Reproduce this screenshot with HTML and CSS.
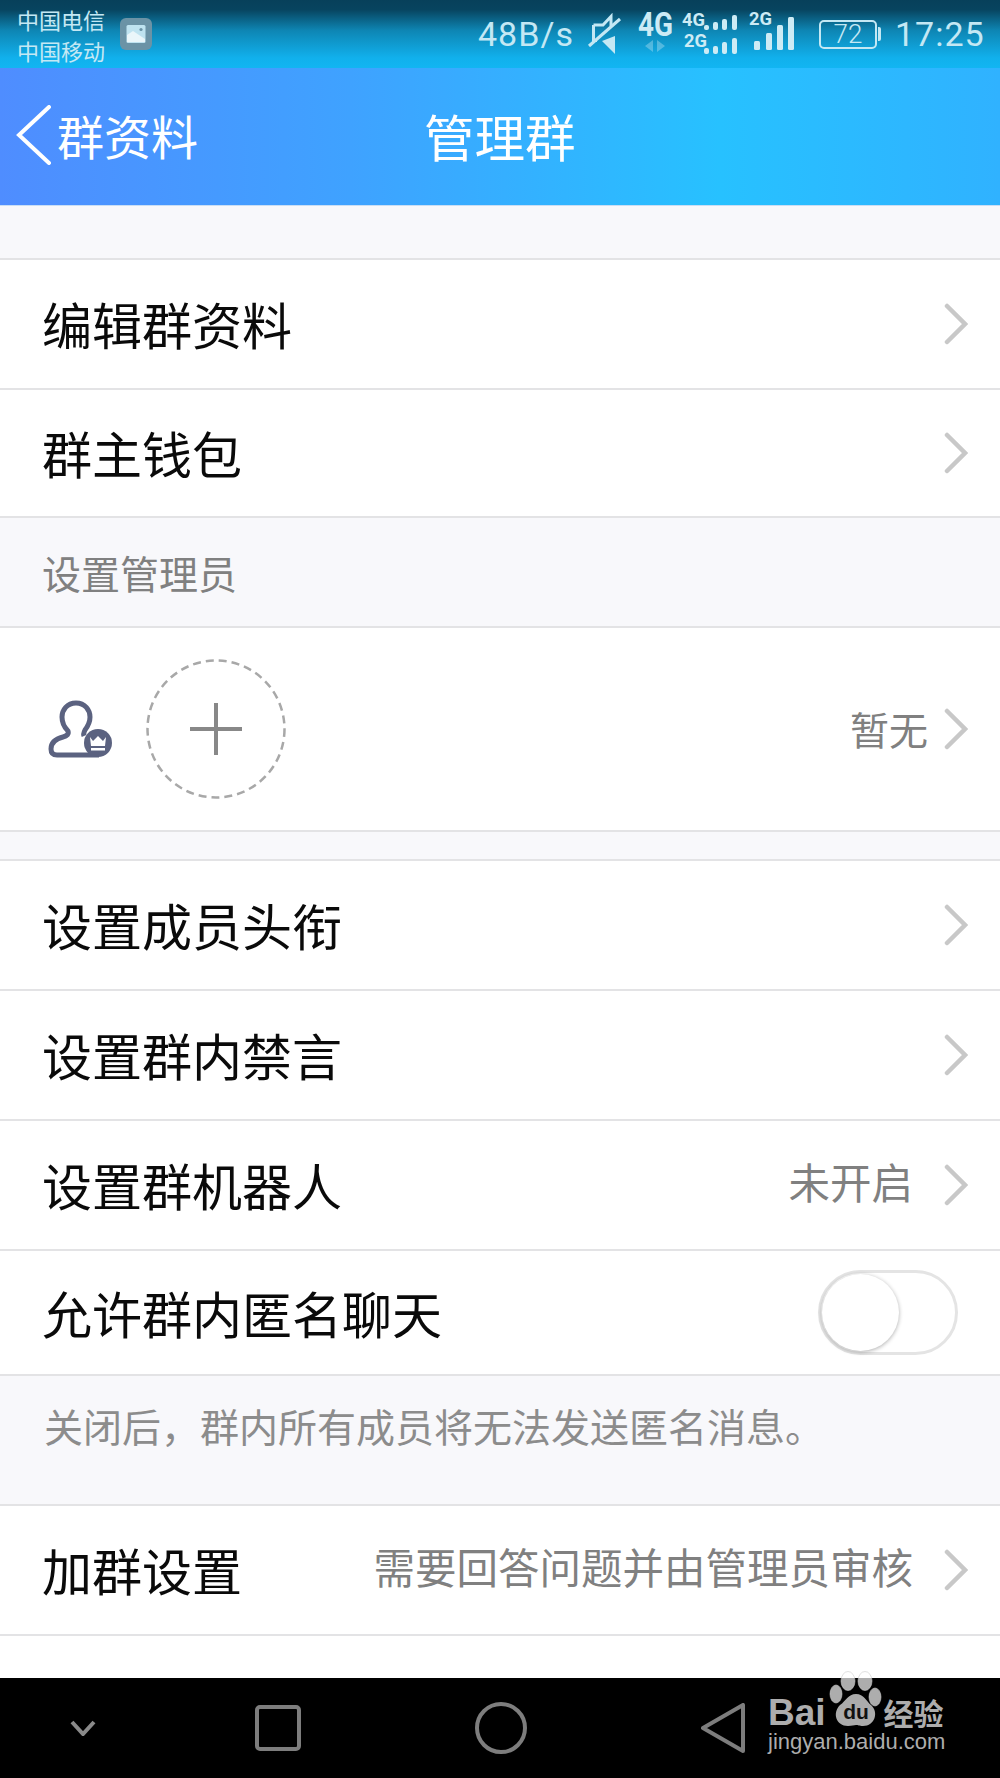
FILE: index.html
```html
<!DOCTYPE HTML>
<html>
<head>
	<meta http-equiv="Content-Type" content="text/html; charset=utf-8">
	<title>管理群</title>
	<link rel="stylesheet" href="styles.css">
</head>
<body>
	<div class="status">
		<div class="carrier">
			<span>中国电信</span>
			<span>中国移动</span>
		</div>
		<svg class="notice" width="32" height="32" viewBox="0 0 32 32">
			<rect width="32" height="32" rx="6" fill="#6b93a6"/>
			<rect x="6.500" y="7" width="19" height="18" rx="1.500" fill="#bfe3f0"/>
			<path d="M7 17l6-4 12 8v3H7z" fill="#eaf6fa"/>
			<circle cx="21" cy="11.500" r="1.600" fill="#6b93a6"/>
		</svg>
		<div class="speed">48B/s</div>
		<svg class="mute" width="34" height="42" viewBox="0 0 34 42" fill="none" stroke="#c4e8f4" stroke-width="3">
			<path d="M5.500 12H15l8-8.500V13M5.500 12v15.500H9"/>
			<path d="M27 23v18L14 28z" fill="#c4e8f4" stroke="none"/>
			<path d="M1 33L32 6"/>
		</svg>
		<svg class="signal" width="156" height="68" viewBox="0 0 156 68">
			<g fill="#cdebf5" font-family="Roboto, sans-serif" font-weight="700">
				<text x="0" y="36" font-size="33" textLength="35" lengthAdjust="spacingAndGlyphs">4G</text>
				<text x="44" y="26" font-size="18" textLength="23" lengthAdjust="spacingAndGlyphs">4G</text>
				<text x="46" y="47" font-size="18" textLength="23" lengthAdjust="spacingAndGlyphs">2G</text>
				<text x="111" y="25" font-size="18" textLength="23" lengthAdjust="spacingAndGlyphs">2G</text>
				<path d="M15 40l-8 6 8 6zM19 40l8 6-8 6z" opacity=".35"/>
				<rect x="66" y="25" width="5" height="5" rx="2"/>
				<rect x="75" y="22" width="5" height="8" rx="2"/>
				<rect x="84" y="19" width="5" height="11" rx="2"/>
				<rect x="94" y="15" width="5" height="15" rx="2"/>
				<rect x="66" y="48" width="5" height="6" rx="2"/>
				<rect x="75" y="46" width="5" height="8" rx="2"/>
				<rect x="84" y="42" width="5" height="12" rx="2"/>
				<rect x="94" y="38" width="5" height="16" rx="2"/>
				<rect x="116" y="41" width="6" height="9" rx="1.500"/>
				<rect x="128" y="33" width="6" height="17" rx="1.500"/>
				<rect x="139" y="25" width="6" height="25" rx="1.500"/>
				<rect x="150" y="17" width="6" height="33" rx="1.500"/>
			</g>
		</svg>
		<div class="battery"><span>72</span></div>
		<div class="clock">17:25</div>
	</div>

	<header>
		<div class="back">
			<svg width="36" height="60" viewBox="0 0 36 60" fill="none" stroke="#fff" stroke-width="4" stroke-linecap="round">
				<path d="M33 2L3 30l30 28"/>
			</svg>
			<span>群资料</span>
		</div>
		<div class="title">管理群</div>
	</header>

	<main>
		<section class="group first">
			<div class="row"><label>编辑群资料</label><svg class="arrow"><use href="#chevron"/></svg></div>
			<div class="row tight"><label>群主钱包</label><svg class="arrow"><use href="#chevron"/></svg></div>
		</section>
		<div class="caption">设置管理员</div>
		<section class="group">
			<div class="admin">
				<svg width="64" height="58" viewBox="0 0 64 58" fill="none" stroke="#5b6280" stroke-width="5">
					<path d="M28 3c-9 0-14 7-14 14 0 7 3 11 6 14 1 3-1 5-5 6-8 2-12 6-12 12 0 4 2 6 6 6h42"/>
					<path d="M28 3c9 0 14 7 14 14 0 6-2 9-5 13-1 2-2 4-1 6"/>
					<circle cx="50" cy="43" r="14" fill="#5b6280" stroke="none"/>
					<path d="M42 37l3 4 5-5 5 5 3-4-1 9H43z" fill="#fff" stroke="none"/>
					<rect x="43" y="48" width="14" height="2.500" fill="#fff" stroke="none"/>
				</svg>
				<svg class="add" width="140" height="140" viewBox="0 0 140 140" fill="none">
					<circle cx="70" cy="70" r="68.500" stroke="#a8a8a8" stroke-width="2.500" stroke-dasharray="8 5"/>
					<path d="M70 44v52M44 70h52" stroke="#888" stroke-width="4"/>
				</svg>
				<span class="value none">暂无</span>
				<svg class="arrow"><use href="#chevron"/></svg>
			</div>
		</section>
		<div class="gap"></div>
		<section class="group">
			<div class="row"><label>设置成员头衔</label><svg class="arrow"><use href="#chevron"/></svg></div>
			<div class="row"><label>设置群内禁言</label><svg class="arrow"><use href="#chevron"/></svg></div>
			<div class="row"><label>设置群机器人</label><span class="value">未开启</span><svg class="arrow"><use href="#chevron"/></svg></div>
			<div class="row short">
				<label>允许群内匿名聊天</label>
				<div class="toggle"><div class="knob"></div></div>
			</div>
		</section>
		<div class="note">关闭后，群内所有成员将无法发送匿名消息。</div>
		<section class="group">
			<div class="row"><label>加群设置</label><span class="value">需要回答问题并由管理员审核</span><svg class="arrow"><use href="#chevron"/></svg></div>
		</section>
	</main>

	<nav>
		<svg class="nav-down" width="26" height="16" viewBox="0 0 26 16" fill="none" stroke="#8a8a8a" stroke-width="4">
			<path d="M2 2l11 12L24 2"/>
		</svg>
		<svg class="nav-square" width="46" height="46" viewBox="0 0 46 46" fill="none" stroke="#7d7d7d" stroke-width="4">
			<rect x="2" y="2" width="42" height="42" rx="3"/>
		</svg>
		<svg class="nav-circle" width="52" height="52" viewBox="0 0 52 52" fill="none" stroke="#7d7d7d" stroke-width="4">
			<circle cx="26" cy="26" r="24"/>
		</svg>
		<svg class="nav-back" width="44" height="50" viewBox="0 0 44 50" fill="none" stroke="#7d7d7d" stroke-width="4" stroke-linejoin="round">
			<path d="M42 2v46L2 25z"/>
		</svg>
	</nav>

	<div class="mark">
		<div class="mark-top">
			<span class="bai">Bai</span>
			<svg class="paw" width="54" height="56" viewBox="0 0 54 56">
				<g fill="#fff" fill-opacity=".68" stroke="#ccc" stroke-opacity=".6">
					<ellipse cx="19" cy="10" rx="7" ry="9.500"/>
					<ellipse cx="36" cy="10" rx="7" ry="9.500"/>
					<ellipse cx="7" cy="23" rx="6" ry="9"/>
					<ellipse cx="46" cy="26" rx="6" ry="9"/>
				</g>
				<path d="M27 23c8 0 10 7 15 11 8 7 4 21-8 21-4 0-5-1-7-1s-4 1-8 1c-12 0-16-13-8-21 6-4 8-11 16-11z" fill="#ababab"/>
				<text x="27" y="48" text-anchor="middle" font-family="Liberation Sans, sans-serif" font-size="21" font-weight="700" fill="#111">du</text>
			</svg>
			<span class="jy">经验</span>
		</div>
		<div class="mark-url">jingyan.baidu.com</div>
	</div>

	<svg class="defs" width="0" height="0">
		<symbol id="chevron" viewBox="0 0 24 42">
			<path d="M3 3l18 18L3 39" fill="none" stroke="#c8c8c8" stroke-width="4.500" stroke-linecap="round"/>
		</symbol>
	</svg>
</body>
</html>
```

FILE: styles.css
```css
body{
	margin: 0;
	height: 1778px;
	display: flex;
	flex-direction: column;
	position: relative;
	overflow: hidden;
	background-color: #fff;
	color: #0a0a0a;
	font-family: "Noto Sans CJK SC", "Noto Sans", sans-serif;
}

/* status bar */
.status{
	height: 68px;
	flex-shrink: 0;
	display: flex;
	align-items: center;
	background: linear-gradient(180deg, #07405a 0, #07445f 14%, #0e86b4 45%, #11b0ec 85%, #12b5f2 100%);
	color: #c4e8f4;
	font-family: Roboto, sans-serif;
}
.carrier{
	margin: 2px 0 0 17px;
	width: 89px;
	display: flex;
	flex-direction: column;
	font-family: "Noto Sans CJK SC", sans-serif;
	font-size: 22px;
	line-height: 31px;
}
.notice{
	margin-left: 14px;
}
.speed{
	margin-left: 326px;
	width: 110px;
	font-size: 34px;
	letter-spacing: 1px;
}
.signal{
	margin-left: 16px;
}
.battery{
	margin-left: 25px;
	box-sizing: border-box;
	width: 58px;
	height: 29px;
	border: 2.500px solid #c4e8f4;
	border-radius: 5px;
	display: flex;
	align-items: center;
	justify-content: center;
	font-size: 26px;
	font-weight: 300;
	position: relative;
}
.battery::after{
	content: "";
	position: absolute;
	right: -6px;
	top: 5px;
	width: 3px;
	height: 14px;
	background: #c4e8f4;
	border-radius: 0 2px 2px 0;
}
.clock{
	margin-left: 18px;
	font-size: 34px;
	letter-spacing: 1px;
}

/* title bar */
header{
	height: 137px;
	flex-shrink: 0;
	display: flex;
	align-items: center;
	position: relative;
	background: linear-gradient(90deg, #4f8dff 0, #3fa2ff 35%, #27c1ff 72%, #30b2ff 100%);
	border-bottom: 1px solid #c9def5;
	color: #fff;
}
.back{
	display: flex;
	align-items: center;
	margin-left: 16px;
	font-size: 47px;
}
.back svg{
	margin: 0 5px 4px 0;
}
.back span{
	padding-bottom: 4px;
}
.title{
	position: absolute;
	left: 424px;
	padding-bottom: 4px;
	font-size: 50.500px;
}

/* list */
main{
	flex: 1;
	background-color: #f8f8fb;
	overflow: hidden;
}
.group{
	background-color: #fff;
	border-top: 2px solid #e3e3e5;
}
.first{
	margin-top: 52px;
}
.row{
	height: 128px;
	padding: 0 32px 0 42px;
	display: flex;
	align-items: center;
	font-size: 50px;
	border-bottom: 2px solid #e3e3e5;
}
.row.tight{
	height: 126px;
}
.row.short{
	height: 123px;
}
.row label{
	flex: 1;
	padding-bottom: 2px;
}
.arrow{
	width: 24px;
	height: 42px;
	flex-shrink: 0;
}
.value{
	margin-right: 31px;
	padding-bottom: 8px;
	font-size: 41.500px;
	color: #808080;
}
.value.none{
	margin-left: auto;
	margin-right: 16px;
	padding-bottom: 2px;
	font-size: 39px;
}
.caption{
	height: 108px;
	padding-left: 42px;
	display: flex;
	align-items: center;
	font-size: 39px;
	color: #808080;
}
.admin{
	height: 202px;
	padding: 0 32px 0 48px;
	display: flex;
	align-items: center;
	border-bottom: 2px solid #e3e3e5;
}
.add{
	margin-left: 34px;
}
.gap{
	height: 27px;
}
.toggle{
	width: 134px;
	height: 79px;
	margin-right: 10px;
	border: 3px solid #e4e4e4;
	border-radius: 43px;
	display: flex;
	background: #fff;
}
.knob{
	width: 77px;
	height: 77px;
	margin: 1px 0 0 1px;
	border-radius: 50%;
	background: #fff;
	box-shadow: 0 1px 4px rgba(0, 0, 0, .32);
}
.note{
	height: 128px;
	padding: 0 0 31px 44px;
	box-sizing: border-box;
	display: flex;
	align-items: center;
	font-size: 39px;
	color: #8c8c8c;
}
main > .group:last-child{
	padding-bottom: 44px;
}

/* soft keys */
nav{
	height: 100px;
	flex-shrink: 0;
	display: flex;
	align-items: center;
	background-color: #000;
}
.nav-down{
	margin: 0 0 0 70px;
}
.nav-square{
	margin-left: 159px;
}
.nav-circle{
	margin-left: 174px;
}
.nav-back{
	margin-left: 174px;
}

/* watermark */
.mark{
	position: absolute;
	left: 768px;
	top: 1671px;
	width: 180px;
	color: #adadad;
}
.mark-top{
	display: flex;
	align-items: flex-end;
	height: 56px;
}
.bai{
	font-family: "Liberation Sans", sans-serif;
	font-weight: 700;
	font-size: 37px;
	line-height: 37px;
	margin-bottom: -4px;
}
.paw{
	margin-left: 3px;
	flex-shrink: 0;
}
.jy{
	margin-left: 1px;
	font-size: 30px;
	font-weight: 700;
	line-height: 30px;
	white-space: nowrap;
}
.mark-url{
	margin-top: 5px;
	font-family: "Liberation Sans", sans-serif;
	font-size: 22px;
	line-height: 20px;
	white-space: nowrap;
}
.defs{
	position: absolute;
}
```
